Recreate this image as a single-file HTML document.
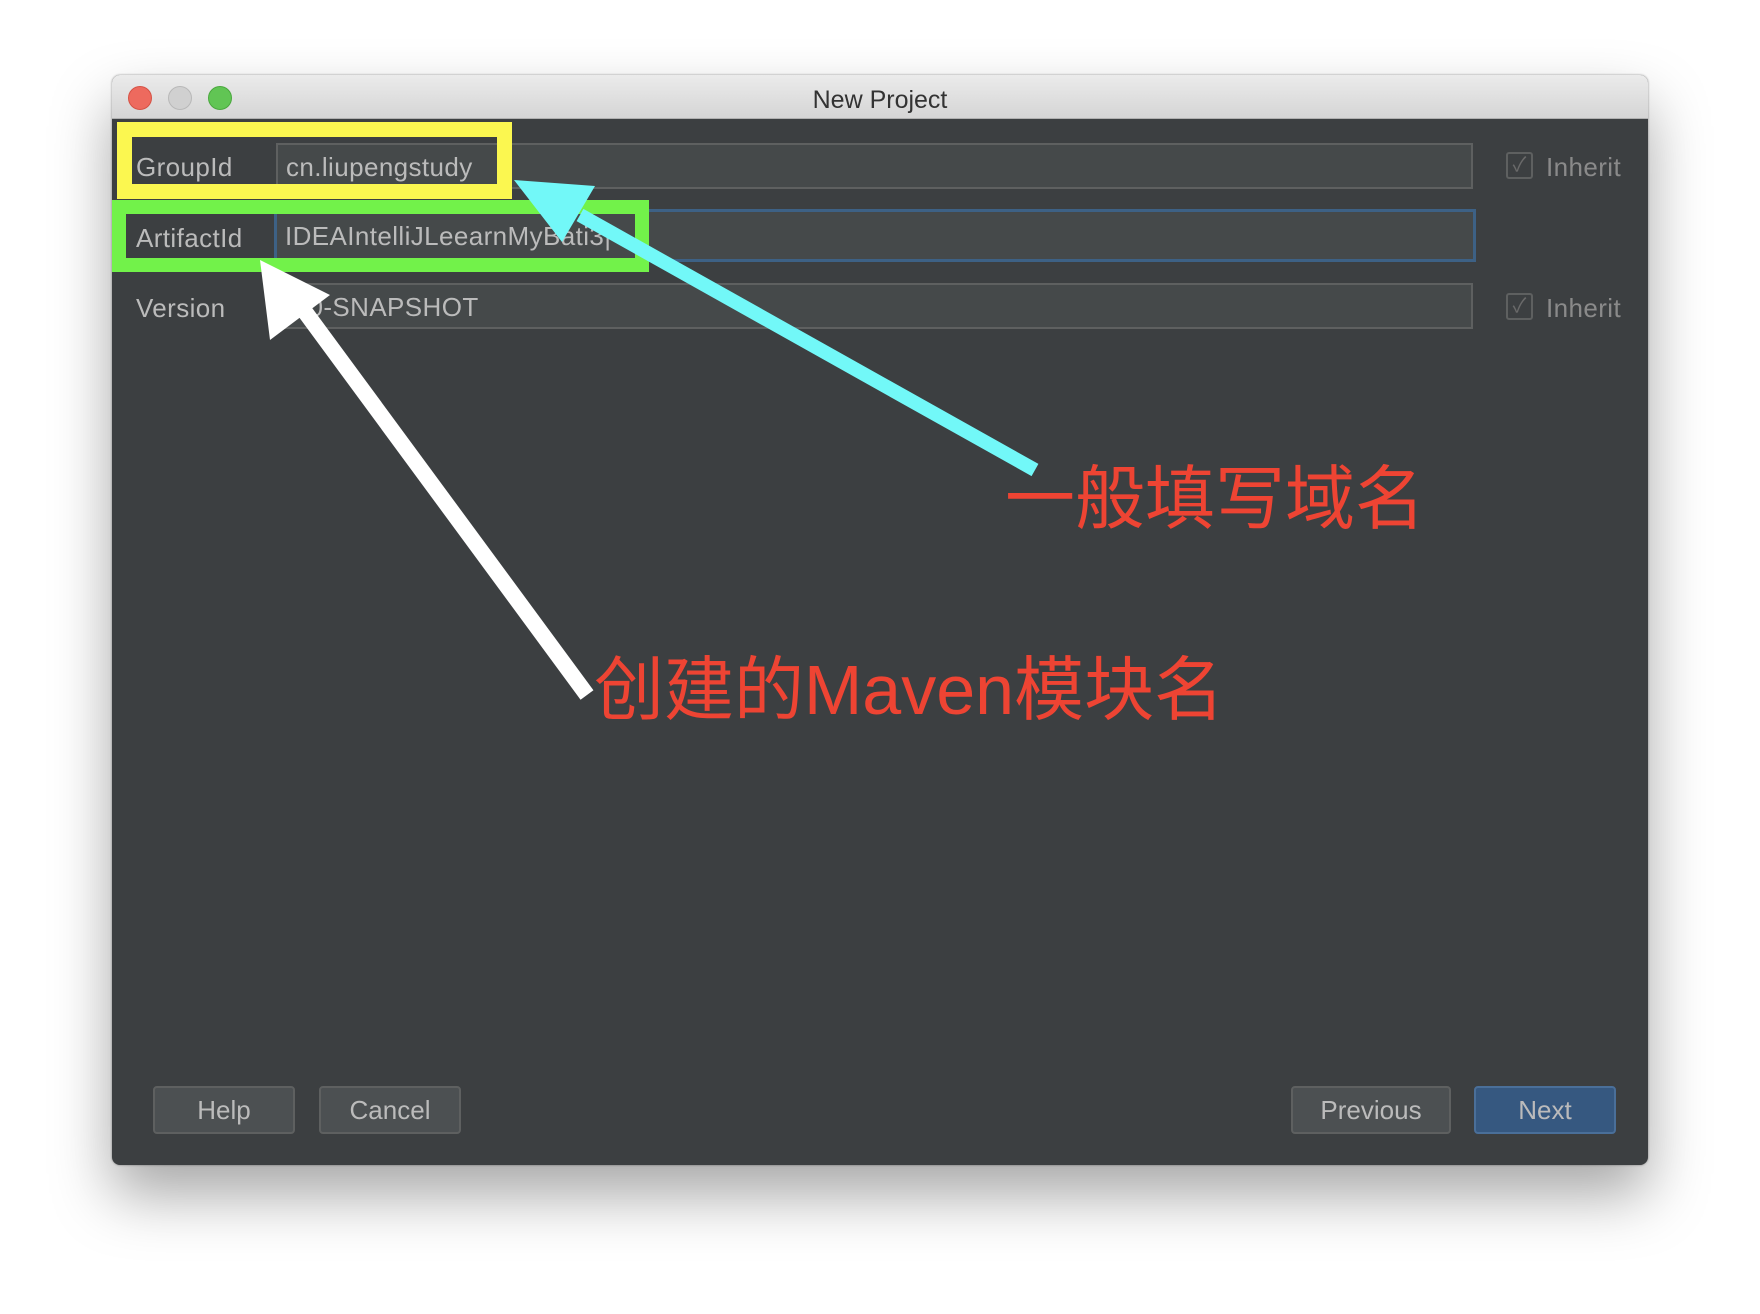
<!DOCTYPE html>
<html><head><meta charset="utf-8"><style>
*{margin:0;padding:0;box-sizing:border-box}
body{width:1760px;height:1314px;background:#fff;position:relative;overflow:hidden;font-family:"Liberation Sans","Noto Sans CJK SC",sans-serif}
.win{position:absolute;left:112px;top:75px;width:1536px;height:1090px;background:#3c3f41;border-radius:8px;box-shadow:0 30px 60px rgba(0,0,0,.35),0 0 2px rgba(0,0,0,.4);overflow:hidden}
.tb{position:absolute;left:0;top:0;width:100%;height:44px;background:linear-gradient(#ebebeb,#d5d5d5);border-bottom:1px solid #b0b0b0;text-align:center;font-size:25px;line-height:50px;color:#333}
.dot{position:absolute;top:11px;width:24px;height:24px;border-radius:50%}
.abs{position:absolute}
.lbl{position:absolute;color:#bbbbbb;font-size:26px;letter-spacing:0.4px}
.fld{position:absolute;background:#45494a;border:2px solid #5e6060;color:#bbbbbb;font-size:26px;letter-spacing:0.4px;padding-left:8px}
.btn{position:absolute;height:48px;border:2px solid #5e6060;background:#4c5052;border-radius:4px;color:#bbbbbb;font-size:26px;text-align:center;line-height:44px}
.cb{position:absolute;width:27px;height:27px;border:2px solid #5e6060;border-radius:3px;color:#6a6a6a;font-size:20px;text-align:center;line-height:23px}
.red{position:absolute;color:#ee4433;font-size:70px;white-space:nowrap;font-family:"Liberation Sans","Noto Sans CJK SC",sans-serif}
</style></head><body>
<div class="win">
<div class="tb">New Project
<div class="dot" style="left:16px;background:#ed6a5e;border:1px solid #d55245"></div>
<div class="dot" style="left:56px;background:#d0d0d0;border:1px solid #b8b8b8"></div>
<div class="dot" style="left:96px;background:#61c554;border:1px solid #4aa83e"></div>
</div>
</div>
<div class="fld" style="left:276px;top:143px;width:1197px;height:46px;line-height:44px">cn.liupengstudy</div>
<div class="fld" style="left:274px;top:209px;width:1202px;height:53px;line-height:49px;border:3px solid #3d6185">IDEAIntelliJLeearnMyBati3|</div>
<div class="fld" style="left:276px;top:283px;width:1197px;height:46px;line-height:44px">1.0-SNAPSHOT</div>
<div class="lbl" style="left:136px;top:152px">GroupId</div>
<div class="lbl" style="left:136px;top:223px">ArtifactId</div>
<div class="lbl" style="left:136px;top:293px">Version</div>
<div class="cb" style="left:1506px;top:152px">✓</div><div class="lbl" style="left:1546px;top:152px;color:#8a8a8a">Inherit</div>
<div class="cb" style="left:1506px;top:293px">✓</div><div class="lbl" style="left:1546px;top:293px;color:#8a8a8a">Inherit</div>
<div class="abs" style="left:117px;top:122px;width:395px;height:77px;border:15px solid #fbf750"></div>
<div class="abs" style="left:112px;top:200px;width:537px;height:72px;border:14px solid #72f24a"></div>
<div class="btn" style="left:153px;top:1086px;width:142px">Help</div>
<div class="btn" style="left:319px;top:1086px;width:142px">Cancel</div>
<div class="btn" style="left:1291px;top:1086px;width:160px">Previous</div>
<div class="btn" style="left:1474px;top:1086px;width:142px;background:#365880;border-color:#4a6f99">Next</div>
<svg class="abs" style="left:0;top:0" width="1760" height="1314">
<line x1="1035" y1="470" x2="580" y2="215" stroke="#72f8f8" stroke-width="14"/>
<polygon points="514,180 595,186 562,242" fill="#72f8f8"/>
<line x1="587" y1="695" x2="300" y2="305" stroke="#fff" stroke-width="16"/>
<polygon points="260,260 270,340 330,295" fill="#fff"/>
</svg>
<div class="red" style="left:1005px;top:443px">一般填写域名</div>
<div class="red" style="left:594px;top:634px">创建的Maven模块名</div>
</body></html>
